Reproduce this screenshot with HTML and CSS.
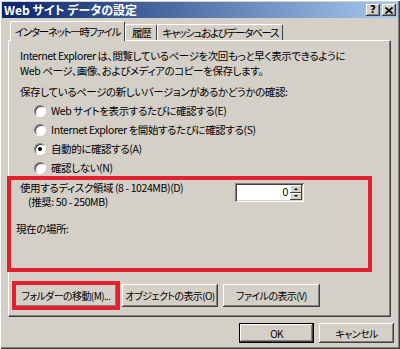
FILE: index.html
```html
<!DOCTYPE html>
<html lang="ja">
<head>
    <meta charset="UTF-8">
    <title>Web サイト データの設定</title>
    <link rel="stylesheet" href="styles.css">
</head>
<body>

    <div class="window">
        <div class="titlebar">
            <span class="title">Web サイト データの設定</span>
            <div class="caption-buttons">
                <span class="cap-btn help">?</span>
                <span class="cap-btn close">
                    <svg width="8" height="7" viewBox="0 0 8 7">
                        <path d="M0.5 0.5 L7.5 6.5 M7.5 0.5 L0.5 6.5" stroke="#000" stroke-width="1.6" fill="none"/>
                    </svg>
                </span>
            </div>
        </div>

        <div class="tabs">
            <span class="tab active">インターネット一時ファイル</span>
            <span class="tab history">履歴</span>
            <span class="tab">キャッシュおよびデータベース</span>
        </div>

        <div class="panel">
            <p class="intro">Internet Explorer は、閲覧しているページを次回もっと早く表示できるように<br>Web ページ、画像、およびメディアのコピーを保存します。</p>
            <p class="question">保存しているページの新しいバージョンがあるかどうかの確認:</p>

            <ul class="radios">
                <li><span class="radio"></span>Web サイトを表示するたびに確認する(E)</li>
                <li><span class="radio"></span>Internet Explorer を開始するたびに確認する(S)</li>
                <li><span class="radio checked"></span>自動的に確認する(A)</li>
                <li><span class="radio"></span>確認しない(N)</li>
            </ul>

            <div class="disk-group marked">
                <div class="disk-row">
                    <div class="disk-label">
                        <div>使用するディスク領域 (8 - 1024MB)(D)</div>
                        <div class="hint">(推奨: 50 - 250MB)</div>
                    </div>
                    <div class="spin">
                        <span class="spin-value">0</span>
                        <span class="spin-arrows">
                            <span class="arrow up"></span>
                            <span class="arrow down"></span>
                        </span>
                    </div>
                </div>
                <div class="location">現在の場所:</div>
            </div>

            <div class="actions">
                <button class="btn marked move">フォルダーの移動(M)...</button>
                <button class="btn objects">オブジェクトの表示(O)</button>
                <button class="btn files">ファイルの表示(V)</button>
            </div>
        </div>

        <div class="footer">
            <button class="btn default">OK</button>
            <button class="btn">キャンセル</button>
        </div>
    </div>

</body>
</html>
```

FILE: styles.css
```css
body {
    margin: 0;
    background-color: #d4d0c8;
    font-family: "Noto Sans CJK JP", sans-serif;
    font-size: 10.5px;
    letter-spacing: -0.4px;
    font-feature-settings: "palt";
    color: black;
}

p, ul {
    margin: 0;
    padding: 0;
}

.window {
    width: 400px;
    height: 349px;
    box-sizing: border-box;
    padding: 2px;
    box-shadow: inset 1px 1px #ffffff, inset -1px -1px #404040, inset -2px -2px #808080;
}

/* title bar */
.titlebar {
    height: 16px;
    display: flex;
    align-items: center;
    justify-content: space-between;
    background: linear-gradient(to right, #0a246a, #a6caf0);
    padding: 0 2px 0 2px;
}

.title {
    color: white;
    font-weight: bold;
    font-size: 12px;
    letter-spacing: 0;
    line-height: 16px;
}

.caption-buttons {
    display: flex;
    gap: 2px;
}

.cap-btn {
    width: 14px;
    height: 12px;
    display: flex;
    align-items: center;
    justify-content: center;
    background-color: #d4d0c8;
    box-shadow: inset -1px -1px #404040, inset 1px 1px #ffffff, inset -2px -2px #808080;
    font-family: "DejaVu Sans", sans-serif;
    font-weight: bold;
    font-size: 10px;
    letter-spacing: 0;
    line-height: 12px;
}

/* tabs */
.tabs {
    display: flex;
    align-items: flex-end;
    height: 19px;
    margin-top: 3px;
    padding-left: 8px;
}

.tab {
    height: 16px;
    line-height: 16px;
    padding: 0 4px;
    letter-spacing: -1.3px;
    border-top: 1px solid white;
    border-left: 1px solid white;
    border-right: 1px solid #404040;
    box-sizing: border-box;
    border-radius: 2px 2px 0 0;
    white-space: nowrap;
}

.tab.history {
    padding: 0 6px;
}

.tab.active {
    height: 20px;
    line-height: 19px;
    margin-bottom: -1px;
    background-color: #d4d0c8;
    position: relative;
    z-index: 1;
}

/* panel */
.panel {
    height: 277px;
    margin: 0 7px 0 6px;
    box-sizing: border-box;
    padding: 7px 11px 0 11px;
    border-top: 1px solid white;
    border-left: 1px solid white;
    border-right: 1px solid #404040;
    border-bottom: 1px solid #404040;
    box-shadow: inset -1px -1px #808080;
}

.intro {
    line-height: 15px;
    white-space: nowrap;
}

.question {
    margin-top: 6px;
    line-height: 15px;
}

.radios {
    list-style: none;
    margin-top: 2px;
    padding-left: 14px;
}

.radios li {
    height: 19px;
    display: flex;
    align-items: center;
}

.radio {
    width: 12px;
    height: 12px;
    box-sizing: border-box;
    border-radius: 50%;
    border: 1px solid;
    border-color: #808080 #ffffff #ffffff #808080;
    background-color: white;
    box-shadow: inset 1px 1px #404040;
    margin-right: 5px;
    display: flex;
    align-items: center;
    justify-content: center;
}

.radio.checked::after {
    content: "";
    width: 4px;
    height: 4px;
    border-radius: 50%;
    background-color: black;
}

/* red annotation */
.marked {
    outline: 4px solid #e4202c;
}

.disk-group {
    height: 88px;
    margin: 3px 0 0 -9px;
    width: 357px;
    box-sizing: border-box;
    padding: 1px 0 0 9px;
}

.disk-row {
    display: flex;
    align-items: flex-start;
}

.disk-label {
    line-height: 14px;
}

.hint {
    padding-left: 8px;
}

.spin {
    margin-left: auto;
    margin-right: 64px;
    margin-top: 2px;
    width: 69px;
    height: 19px;
    box-sizing: border-box;
    display: flex;
    background-color: white;
    box-shadow: inset 1px 1px #808080, inset -1px -1px #ffffff, inset 2px 2px #404040, inset -2px -2px #d4d0c8;
    padding: 2px;
}

.spin-value {
    flex: 1;
    text-align: right;
    padding-right: 2px;
    line-height: 15px;
    font-family: "Liberation Sans", sans-serif;
}

.spin-arrows {
    width: 12px;
    display: flex;
    flex-direction: column;
}

.arrow {
    flex: 1;
    display: flex;
    align-items: center;
    justify-content: center;
    background-color: #d4d0c8;
    box-shadow: inset -1px -1px #404040, inset 1px 1px #ffffff;
}

.arrow::after {
    content: "";
    border-left: 2px solid transparent;
    border-right: 2px solid transparent;
}

.arrow.up::after {
    border-bottom: 2px solid black;
}

.arrow.down::after {
    border-top: 2px solid black;
}

.location {
    margin-top: 13px;
    line-height: 13px;
    margin-left: -4px;
}

/* buttons */
.btn {
    height: 23px;
    padding: 0;
    border: none;
    background-color: #d4d0c8;
    box-shadow: inset -1px -1px #404040, inset 1px 1px #ffffff, inset -2px -2px #808080;
    font-family: "Noto Sans CJK JP", sans-serif;
    font-size: 10px;
    letter-spacing: -0.6px;
    font-feature-settings: "palt";
    color: black;
    white-space: nowrap;
}

.actions {
    display: flex;
    gap: 5px;
    margin: 16px 0 0 -5px;
}

.move {
    width: 102px;
    outline-offset: -1px;
}

.objects {
    width: 96px;
}

.files {
    width: 97px;
}

.footer {
    display: flex;
    justify-content: flex-end;
    gap: 5px;
    margin-top: 6px;
    padding-right: 4px;
}

.footer .btn {
    width: 75px;
    height: 20px;
}

.btn.default {
    box-shadow: inset 0 0 0 1px black, inset -2px -2px #404040, inset 2px 2px #ffffff, inset -3px -3px #808080;
}
```
